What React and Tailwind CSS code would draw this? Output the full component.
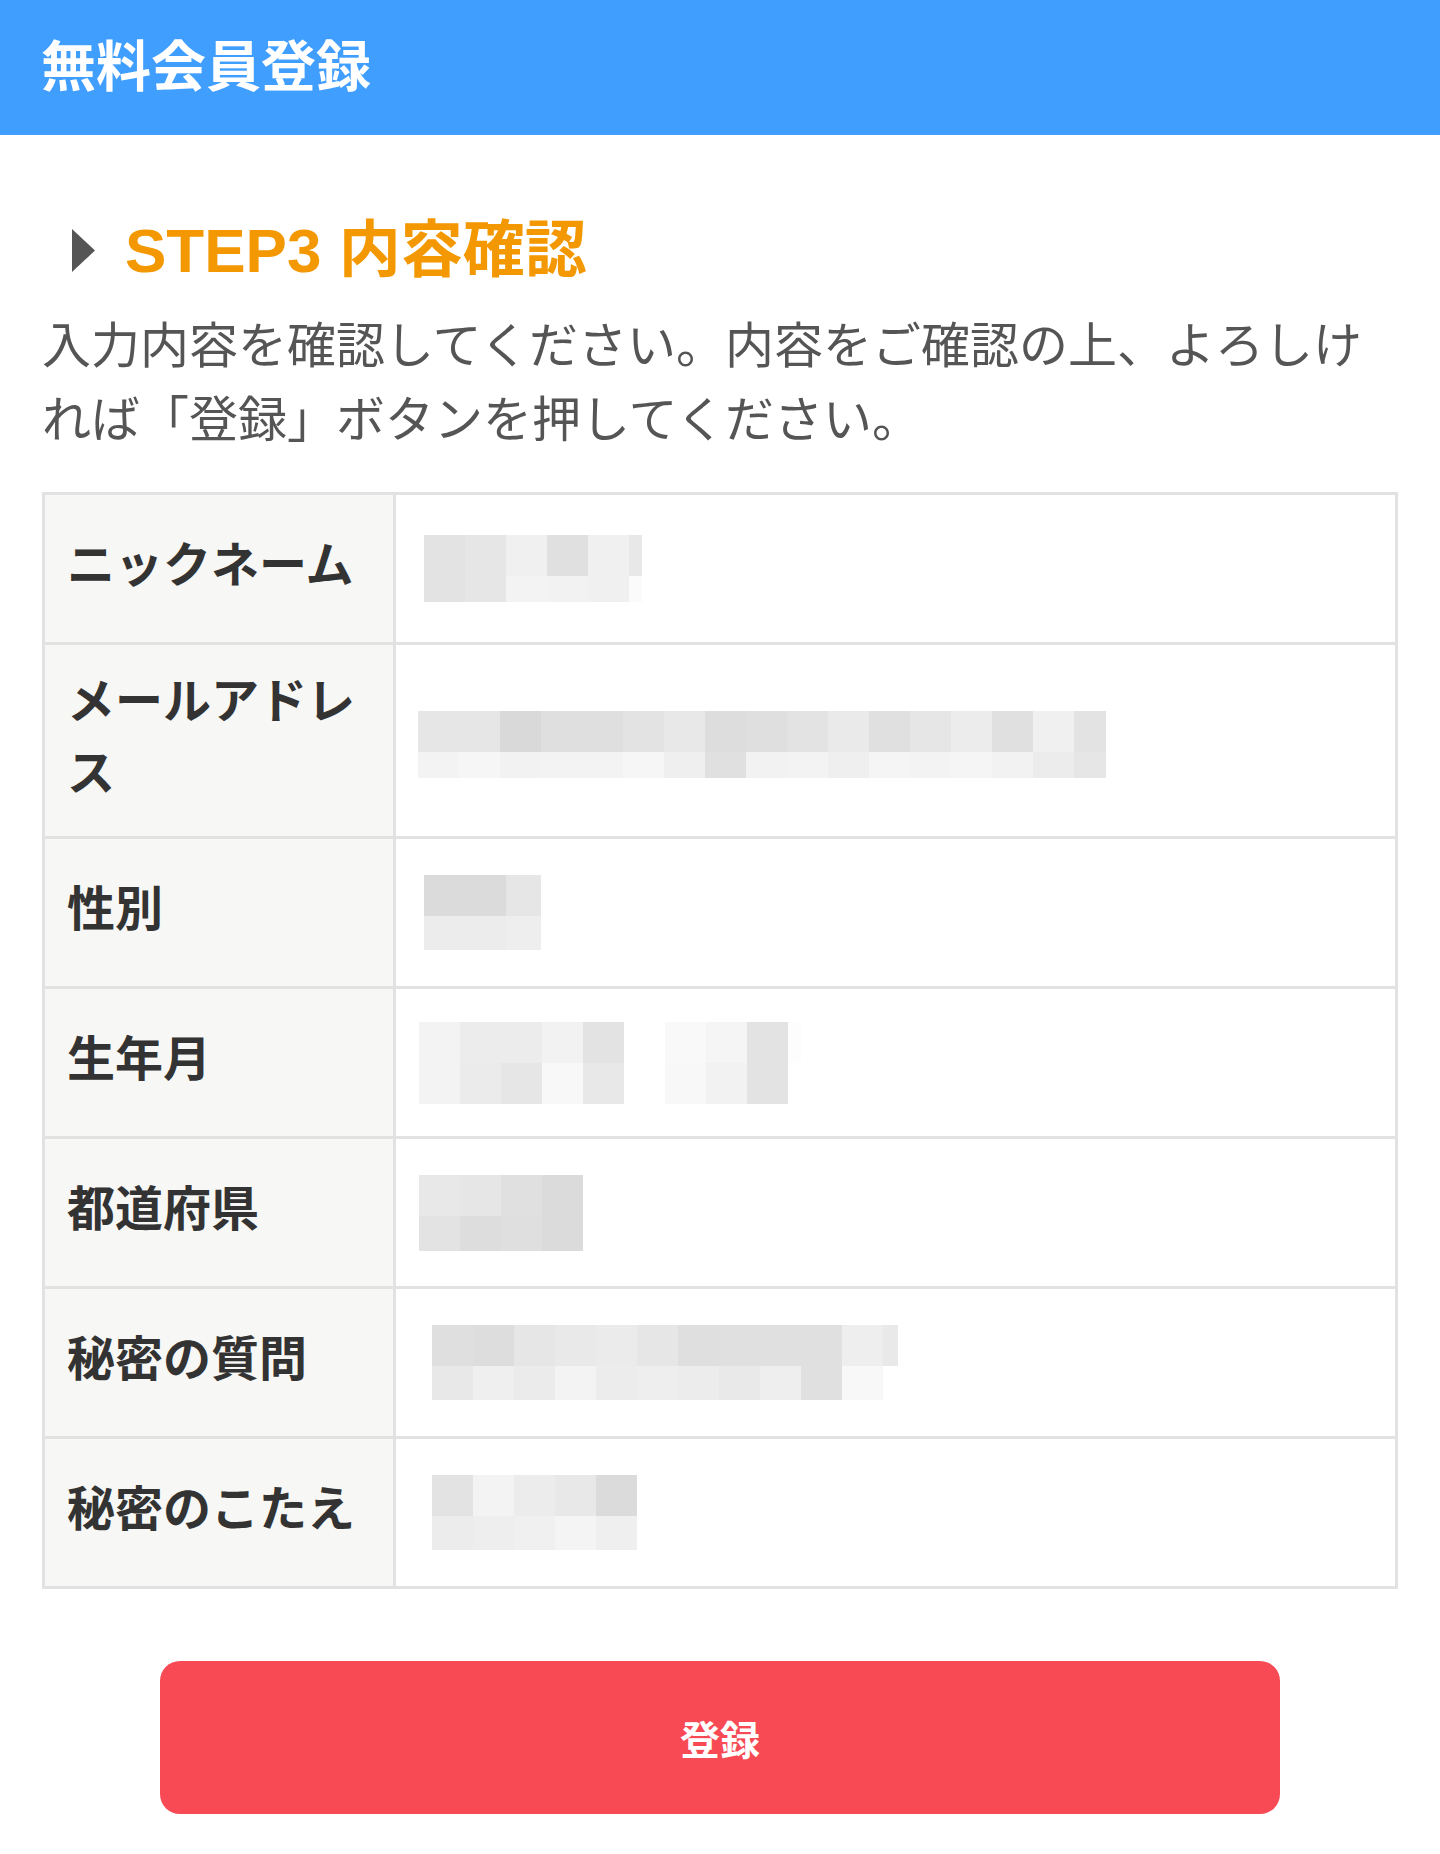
import React from 'react'

const shade = {
  d9: 'bg-[#d9d9d9]',
  db: 'bg-[#dbdbdb]',
  dd: 'bg-[#dddddd]',
  df: 'bg-[#dfdfdf]',
  e0: 'bg-[#e0e0e0]',
  e3: 'bg-[#e3e3e3]',
  e6: 'bg-[#e6e6e6]',
  e8: 'bg-[#e8e8e8]',
  e9: 'bg-[#e9e9e9]',
  ea: 'bg-[#eaeaea]',
  eb: 'bg-[#ebebeb]',
  ec: 'bg-[#ececec]',
  ee: 'bg-[#eeeeee]',
  ef: 'bg-[#efefef]',
  f0: 'bg-[#f0f0f0]',
  f2: 'bg-[#f2f2f2]',
  f3: 'bg-[#f3f3f3]',
  f4: 'bg-[#f4f4f4]',
  f5: 'bg-[#f5f5f5]',
  f6: 'bg-[#f6f6f6]',
  f8: 'bg-[#f8f8f8]',
  f9: 'bg-[#f9f9f9]',
  fb: 'bg-[#fbfbfb]',
  fd: 'bg-[#fdfdfd]',
  ff: 'bg-white',
}

// blurred (pixelated) value placeholder
const Mosaic = ({ top, bottom, bottomH = 'h-[34px]', last = 'w-[41px]', className = '' }) => {
  const t = top.split(' ')
  const b = bottom.split(' ')
  return (
    <div className={`flex flex-col ${className}`}>
      <div className="flex h-[41px]">
        {t.map((s, i) => (
          <div key={i} className={`${shade[s]} ${i === t.length - 1 ? last : 'w-[41px]'}`} />
        ))}
      </div>
      <div className={`flex ${bottomH}`}>
        {b.map((s, i) => (
          <div key={i} className={`${shade[s]} ${i === b.length - 1 ? last : 'w-[41px]'}`} />
        ))}
      </div>
    </div>
  )
}

const rows = [
  {
    label: 'ニックネーム',
    value: <Mosaic className="ml-[28px]" top="e3 e6 f0 e0 f0 e8" bottom="e3 e6 f3 f2 f0 fb" bottomH="h-[26px]" last="w-[13px]" />,
  },
  {
    label: 'メールアドレス',
    value: (
      <Mosaic
        className="ml-[22px] mt-[8px]"
        top="e6 e6 d9 df df e3 e8 dd df e3 ea e0 e6 ec e0 f0 e3"
        bottom="f3 f6 f2 f3 f3 f6 ef e0 f2 f3 ef f5 f3 f5 f2 ec e6"
        bottomH="h-[26px]"
        last="w-[32px]"
      />
    ),
  },
  {
    label: '性別',
    value: <Mosaic className="ml-[28px]" top="db db e6" bottom="ec ec ee" last="w-[35px]" />,
  },
  {
    label: '生年月',
    value: (
      <Mosaic
        className="ml-[23px]"
        top="f3 ec ec f2 e3 ff f9 f5 e3 fd"
        bottom="f3 eb e6 f8 e8 ff f8 f2 e3 ff"
        bottomH="h-[41px]"
        last="w-[13px]"
      />
    ),
  },
  {
    label: '都道府県',
    value: <Mosaic className="ml-[23px]" top="e8 e6 e0 db" bottom="e3 dd df db" bottomH="h-[35px]" />,
  },
  {
    label: '秘密の質問',
    value: (
      <Mosaic
        className="ml-[36px]"
        top="df dd e6 e9 eb e6 df e0 e0 e0 ee e9"
        bottom="e8 ef eb f3 ec ee ec e9 ee e0 f8 ff"
        last="w-[15px]"
      />
    ),
  },
  {
    label: '秘密のこたえ',
    value: <Mosaic className="ml-[36px]" top="e3 f3 ec e8 db" bottom="ec ee f0 f4 ef" />,
  },
]

export default function App() {
  return (
    <div className="w-[1440px] min-h-[1854px] bg-white font-['Noto_Sans_CJK_JP',sans-serif]">
      <header className="h-[135px] bg-[#409eff] flex items-center pl-[41px] pb-[10px]">
        <h1 className="text-[55px] leading-none font-bold text-white">無料会員登録</h1>
      </header>

      <main className="px-[42px] pb-[39px]">
        <div className="flex items-center mt-[69px] h-[93px]">
          <svg width="23" height="43" viewBox="0 0 23 43" className="ml-[30px] shrink-0">
            <polygon points="0,0 23,21.5 0,43" fill="#555555" />
          </svg>
          <h2 className="ml-[30px] text-[62px] leading-[1.5] font-bold text-[#f39800] font-['Liberation_Sans','Noto_Sans_CJK_JP',sans-serif]">
            STEP3 内容確認
          </h2>
        </div>

        <p className="mt-[8px] text-[49px] leading-[1.5] text-[#555555]">
          入力内容を確認してください。内容をご確認の上、よろしければ「登録」ボタンを押してください。
        </p>

        <div className="mt-[40px] border-[3px] border-[#e2e2e2]">
          {rows.map((row, i) => (
            <div key={row.label} className={`flex ${i > 0 ? 'border-t-[3px] border-[#e2e2e2]' : ''}`}>
              <div className="w-[351px] min-h-[147px] shrink-0 bg-[#f7f7f5] border-r-[3px] border-[#e2e2e2] px-[22px] pt-[16px] pb-[31px] flex items-center">
                <span className="text-[48px] leading-[1.5] font-bold text-[#333333]">{row.label}</span>
              </div>
              <div className="flex-1 flex items-center">{row.value}</div>
            </div>
          ))}
        </div>

        <div className="flex justify-center mt-[72px]">
          <button className="w-[1120px] h-[153px] rounded-[20px] bg-[#f84a55] text-white text-[40px] font-bold leading-none">
            登録
          </button>
        </div>
      </main>
    </div>
  )
}
